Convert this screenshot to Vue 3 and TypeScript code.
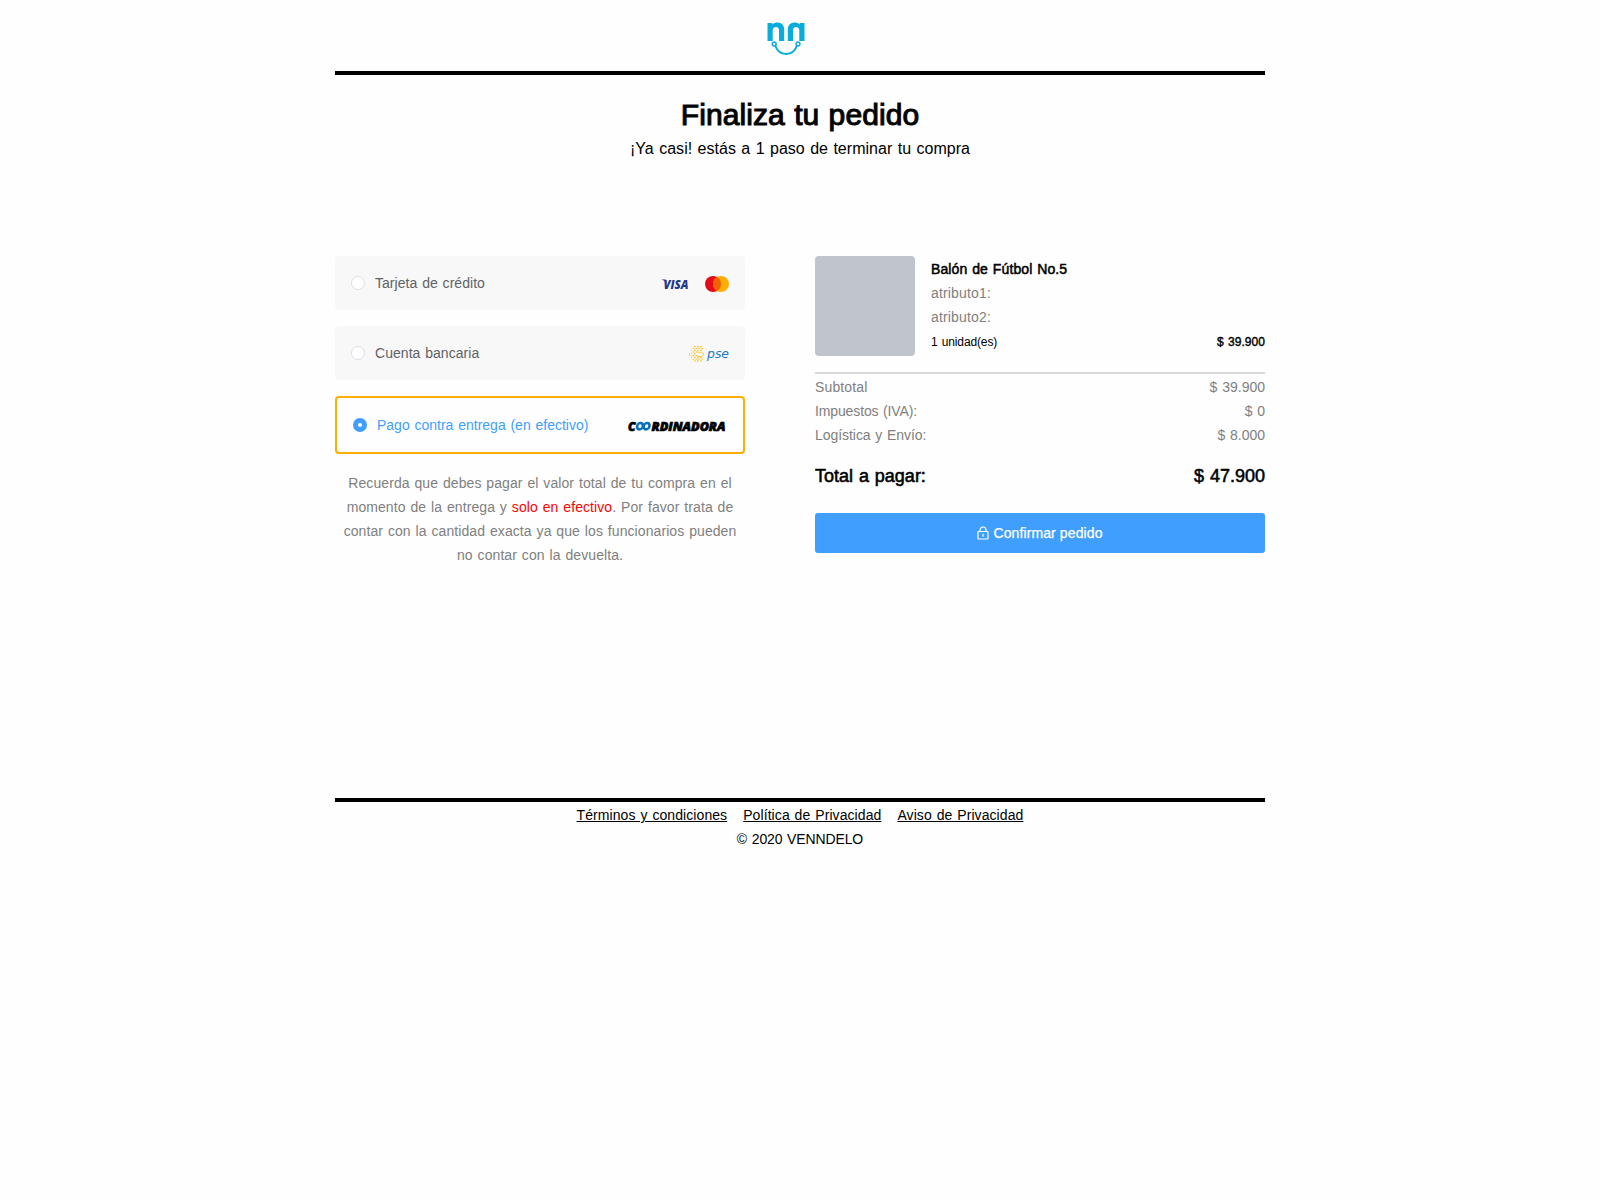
<script setup lang="ts">
import { ref } from 'vue'

type Method = 'card' | 'bank' | 'cash'

const methods: { id: Method; label: string }[] = [
  { id: 'card', label: 'Tarjeta de crédito' },
  { id: 'bank', label: 'Cuenta bancaria' },
  { id: 'cash', label: 'Pago contra entrega (en efectivo)' },
]
const selected = ref<Method>('cash')

const costs = [
  { label: 'Subtotal', value: '$ 39.900', cls: 'c0' },
  { label: 'Impuestos (IVA):', value: '$ 0', cls: 'c1' },
  { label: 'Logística y Envío:', value: '$ 8.000', cls: 'c2' },
]

const links = ['Términos y condiciones', 'Política de Privacidad', 'Aviso de Privacidad']

// Halftone sun of the PSE mark: dots on staggered rows
const dots: { x: number; y: number; w: number }[] = []
const rows = [
  [5, 8, 11],
  [3.5, 6.5, 9.5, 12.5],
  [2, 5, 8, 11],
  [3.5, 6.5],
  [0, 2, 5],
  [0.5, 3.5, 6.5],
  [2, 5, 8, 11],
  [3.5, 6.5, 9.5, 12.5],
  [5, 8, 11],
]
rows.forEach((r, i) => r.forEach((x) => dots.push({ x, y: i * 1.8, w: x < 3 ? 1 : 1.7 })))
</script>

<template>
  <div class="page">
    <header class="top">
      <svg class="logo" width="40" height="36" viewBox="0 0 40 36">
        <g fill="#08aedb">
          <path d="M1.5 1H6.4V2.600C7.800 1.200 9.400.6 11.400.6 15.800.6 18.200 3.400 18.200 8V19H13V8.600C13 6.200 12 5 10 5 7.900 5 6.700 6.300 6.700 8.600V19H1.500Z" />
          <path d="M38.500 1H33.600V2.600C32.200 1.200 30.600.6 28.600.6 24.200.6 21.800 3.400 21.800 8V19H27V8.600C27 6.200 28 5 30 5 32.100 5 33.300 6.300 33.300 8.600V19H38.500Z" />
        </g>
        <g fill="none" stroke="#08aedb">
          <circle cx="8.200" cy="22" r="1.900" stroke-width="1.500" />
          <circle cx="32" cy="22" r="1.900" stroke-width="1.500" />
          <path d="M9.400 24C11.200 29 15 31.900 20.100 31.900S29 29 30.800 24" stroke-width="2" />
        </g>
      </svg>
    </header>

    <section class="heading">
      <h1>Finaliza tu pedido</h1>
      <p>¡Ya casi! estás a 1 paso de terminar tu compra</p>
    </section>

    <main class="content">
      <section class="methods">
        <div
          v-for="m in methods"
          :key="m.id"
          class="method"
          :class="{ active: selected === m.id }"
          @click="selected = m.id"
        >
          <span class="radio"></span>
          <span class="label" :class="m.id">{{ m.label }}</span>
          <span class="brands">
            <svg v-if="m.id === 'card'" width="70" height="20" viewBox="0 0 70 20">
              <text x="3.500" y="14.500" textLength="25" lengthAdjust="spacingAndGlyphs" class="visa">VISA</text>
              <path d="M1.200 5.500H5.800L7 9Q4.500 6.300 1.200 5.500Z" fill="#20378b" />
              <circle cx="53" cy="10" r="8" fill="#e60a18" />
              <circle cx="61" cy="10" r="8" fill="#ffae00" />
              <path d="M57 3.070A8 8 0 0 1 57 16.930A8 8 0 0 1 57 3.070Z" fill="#f26006" />
            </svg>
            <svg v-else-if="m.id === 'bank'" width="42" height="20" viewBox="0 0 42 20">
              <rect v-for="(d, i) in dots" :key="i" :x="d.x + 1" :y="d.y + 2" :width="d.w" height="1.100" fill="#ffc020" />
              <path d="M9 8.200H13.500L16 10.200L13.500 12.400H9" fill="none" stroke="#ffc84a" stroke-width="1" />
              <text x="19" y="14" textLength="22" lengthAdjust="spacingAndGlyphs" class="pse">pse</text>
            </svg>
            <svg v-else width="102" height="20" viewBox="0 0 102 20">
              <text x="2" y="14.500" textLength="7.500" lengthAdjust="spacingAndGlyphs" class="coord">C</text>
              <g fill="none" stroke="#0870bd" stroke-width="2.600">
                <ellipse cx="14" cy="10.200" rx="2.900" ry="3.200" transform="skewX(-10) translate(1.800 0)" />
                <ellipse cx="20.600" cy="10.200" rx="2.900" ry="3.200" transform="skewX(-10) translate(1.800 0)" />
              </g>
              <text x="25.500" y="14.500" textLength="74" lengthAdjust="spacingAndGlyphs" class="coord">RDINADORA</text>
            </svg>
          </span>
        </div>
        <p class="note">
          Recuerda que debes pagar el valor total de tu compra en el<br />
          momento de la entrega y <em>solo en efectivo</em>. Por favor trata de<br />
          contar con la cantidad exacta ya que los funcionarios pueden<br />
          no contar con la devuelta.
        </p>
      </section>

      <section class="summary">
        <div class="product">
          <div class="thumb"></div>
          <div class="info">
            <div class="name">Balón de Fútbol No.5</div>
            <div class="attr">atributo1:</div>
            <div class="attr">atributo2:</div>
            <div class="qty">
              <span>1 unidad(es)</span>
              <b>$ 39.900</b>
            </div>
          </div>
        </div>
        <div class="costs">
          <div v-for="c in costs" :key="c.label" class="cost">
            <span :class="c.cls">{{ c.label }}</span>
            <span class="amount">{{ c.value }}</span>
          </div>
        </div>
        <div class="total">
          <span>Total a pagar:</span>
          <span>$ 47.900</span>
        </div>
        <button class="confirm" type="button">
          <svg width="12" height="14" viewBox="0 0 12 14" fill="none" stroke="#fff" stroke-width="1.200">
            <rect x="1" y="5.500" width="10" height="7.500" rx=".5" />
            <path d="M3 5.500V4A3 3 0 0 1 9 4V5.500M6 7.800V10.800" />
          </svg>
          <span>Confirmar pedido</span>
        </button>
      </section>
    </main>

    <footer class="bottom">
      <nav>
        <a v-for="(l, i) in links" :key="l" :class="'l' + i">{{ l }}</a>
      </nav>
      <div class="copy">© 2020 VENNDELO</div>
    </footer>
  </div>
</template>

<style>
html,
body {
  background: #fefefe;
}
</style>

<style scoped>
.page {
  width: 930px;
  margin: 0 auto;
  font: 14px/24px 'Liberation Sans', Arial, sans-serif;
  word-spacing: 0.9px;
  color: #000;
}
.top {
  box-sizing: border-box;
  height: 75px;
  padding-top: 22px;
  border-bottom: 4px solid #000;
}
.logo {
  display: block;
  margin-left: 431px;
}
.heading {
  height: 181px;
  text-align: center;
}
.heading h1 {
  margin: 0;
  padding-top: 21px;
  font-size: 30px;
  line-height: 38px;
  font-weight: 400;
  letter-spacing: 0.08px;
  -webkit-text-stroke: 1.1px #0a0a0a;
}
.heading p {
  margin: 3px 0 0;
  font-size: 16px;
  letter-spacing: 0.03px;
}
.content {
  display: flex;
  justify-content: space-between;
  height: 542px;
}
.methods {
  width: 410px;
}
.method {
  box-sizing: border-box;
  display: flex;
  align-items: center;
  height: 54px;
  margin-bottom: 16px;
  padding: 0 15px 0 16px;
  border-radius: 4px;
  background: #f8f8f8;
  color: #606266;
}
.method.active {
  height: 58px;
  border: 2px solid #ffae00;
  background: #fefefe;
  color: #409eff;
}
.radio {
  box-sizing: border-box;
  width: 14px;
  height: 14px;
  margin-right: 10px;
  border: 1px solid #dcdfe6;
  border-radius: 50%;
  background: #fff;
}
.active .radio {
  border: 5px solid #409eff;
}
.label.card,
.label.bank {
  letter-spacing: 0.04px;
}
.brands {
  display: flex;
  margin-left: auto;
  padding-top: 2px;
}
.visa {
  font: italic 800 12.5px 'Open Sans', sans-serif;
  fill: #20378b;
}
.pse {
  font: italic 200 12.5px 'DejaVu Sans', sans-serif;
  fill: #2279bd;
}
.coord {
  font: italic 800 12px 'Open Sans', sans-serif;
  fill: #000;
  stroke: #000;
  stroke-width: 0.7px;
}
.note {
  margin: 17px 0 0;
  text-align: center;
  letter-spacing: 0.08px;
  color: #808080;
  white-space: nowrap;
}
.note em {
  font-style: normal;
  color: #f00;
}
.summary {
  width: 450px;
}
.product {
  display: flex;
  height: 116px;
  box-sizing: border-box;
}
.thumb {
  width: 100px;
  height: 100px;
  margin-right: 16px;
  border-radius: 4px;
  background: #c0c4cc;
}
.info {
  flex: 1;
  padding-top: 1px;
}
.name {
  letter-spacing: 0.1px;
  -webkit-text-stroke: 0.5px #000;
}
.attr {
  color: #808080;
  letter-spacing: 0.16px;
}
.qty {
  display: flex;
  justify-content: space-between;
  padding-top: 1px;
  font-size: 12px;
  letter-spacing: -0.12px;
}
.qty b {
  font-weight: 400;
  letter-spacing: 0.05px;
  -webkit-text-stroke: 0.4px #000;
}
.costs {
  padding-top: 1px;
  border-top: 2px solid #d8d8d8;
  color: #808080;
}
.cost {
  display: flex;
  justify-content: space-between;
}
.c0 {
  letter-spacing: 0.14px;
}
.c1 {
  letter-spacing: -0.13px;
}
.c2 {
  letter-spacing: -0.05px;
}
.total {
  display: flex;
  justify-content: space-between;
  margin-top: 17px;
  font-size: 18px;
  -webkit-text-stroke: 0.55px #000;
}
.confirm {
  display: flex;
  align-items: center;
  justify-content: center;
  gap: 4px;
  width: 100%;
  height: 40px;
  margin: 25px 0 0;
  padding: 0;
  border: 0;
  border-radius: 3px;
  background: #409eff;
  font: inherit;
  letter-spacing: 0.11px;
  color: #fff;
  -webkit-text-stroke: 0.25px #fff;
}
.bottom {
  border-top: 4px solid #000;
  padding-top: 1px;
  text-align: center;
}
.bottom nav {
  display: flex;
  justify-content: center;
  gap: 16px;
}
.bottom a {
  text-decoration: underline;
  letter-spacing: 0.08px;
}
.copy {
  letter-spacing: -0.12px;
}
</style>
